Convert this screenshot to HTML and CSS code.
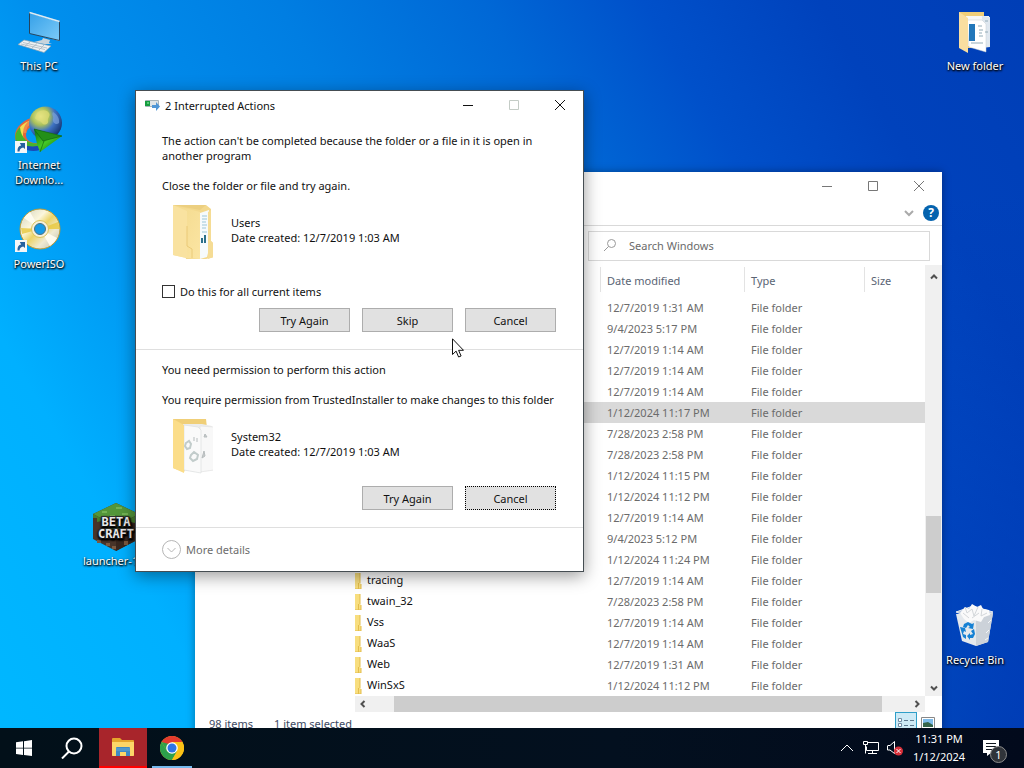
FILE: index.html
```html
<!DOCTYPE html>
<html lang="en">
<head>
  <meta charset="UTF-8">
  <meta name="viewport" content="width=device-width, initial-scale=1.0">
  <title>Desktop</title>
  <link rel="stylesheet" href="styles.css">
</head>
<body>

  <svg class="defs" aria-hidden="true">
    <defs>
      <linearGradient id="gold" x1="0" y1="0" x2="1" y2="1"><stop offset="0" stop-color="#f3d98c"/><stop offset="1" stop-color="#fbe5a3"/></linearGradient>
      <linearGradient id="screen" x1="0" y1="0" x2="1" y2="1"><stop offset="0" stop-color="#35a0e8"/><stop offset="1" stop-color="#7ccbf8"/></linearGradient>
      <radialGradient id="globe" cx="0.35" cy="0.3" r="0.75"><stop offset="0" stop-color="#f3f29a"/><stop offset="0.35" stop-color="#a9c05a"/><stop offset="0.6" stop-color="#3f74c4"/><stop offset="1" stop-color="#15326e"/></radialGradient>
      <linearGradient id="arrow" x1="0" y1="0" x2="1" y2="1"><stop offset="0" stop-color="#0a6b14"/><stop offset="0.5" stop-color="#45c926"/><stop offset="1" stop-color="#06580c"/></linearGradient>
      <linearGradient id="disc" x1="0" y1="0" x2="1" y2="1"><stop offset="0" stop-color="#d0d0be"/><stop offset="0.35" stop-color="#fbf6dc"/><stop offset="0.5" stop-color="#ecd468"/><stop offset="0.7" stop-color="#efead2"/><stop offset="1" stop-color="#bcbcae"/></linearGradient>
      <symbol id="shortcut" viewBox="0 0 12 12">
        <rect width="12" height="12" fill="#f4f6f8"/>
        <path d="M2.500 10.500C2.300 7 3.600 5 6.200 4.600L4.800 2H10v6L8.200 6.500C6 6.800 4.800 8 4.500 10.500z" fill="#26619f"/>
      </symbol>
      <symbol id="slice" viewBox="0 0 7 16">
        <path d="M0 0h5v10l1 1v5H0z" fill="#f8de7e"/>
        <path d="M5 0v10M3.500 10v6M6 11v5H0" fill="none" stroke="#e3bd4d"/>
      </symbol>
    </defs>
  </svg>

  <main class="desktop">
    <a class="shortcut pc" href="#">
      <svg viewBox="0 0 48 48">
        <path d="M14.500 4l30 9v20l-30-8z" fill="#d6e9f5"/>
        <path d="M14.500 4.500l30 9v19l-30-7z" fill="url(#screen)" stroke="#24445e"/>
        <path d="M14.500 4.500l30 9" stroke="#d9edf9" stroke-width="1.500"/>
        <path d="M28 30l7 2-1 3 3 1-8 0-10-2 8-2z" fill="#c8d4dc"/>
        <path d="M9 32l27 6-7 6.500L3 36.500z" fill="#eef2f4" stroke="#8fa3b1" stroke-width="0.700"/>
        <path d="M8 34.500l24 5.500M6 36l24 5.500M15 34l-5 4M22 35.500l-5 4.500M29 37l-5 5" stroke="#a9b6c0" stroke-width="0.800"/>
      </svg>
      <span>This PC</span>
    </a>
    <a class="shortcut idm" href="#">
      <svg viewBox="0 0 48 48">
        <path d="M20 10C9 12 0 20 0 29s7 13 19 13l6-6c-8 1-14-2-14-8 0-5 4-9 10-10z" fill="#e3653c"/>
        <path d="M14 14C6 17 1 24 1 30s7 12 19 12l4-5c-9 1-16-3-16-9s4-10 8-11z" fill="#f3dc50"/>
        <path d="M5 20c-5 5-6 11-3 16 3 6 13 8 21 6l3-6C15 38 6 33 5 20z" fill="#46b52c"/>
        <path d="M1 33c3 9 14 13 24 10l2-5C17 41 6 39 1 33z" fill="#1a49b5"/>
        <path d="M18 14c-6 2-9 7-8 12" fill="none" stroke="#f08a4a" stroke-width="3"/>
        <circle cx="30.500" cy="16" r="16.500" fill="url(#globe)"/>
        <path d="M22 6c5-4 10-3 12 0s-2 5-1 8-4 5-6 2-6-3-7-5z" fill="#e0dd76" opacity="0.700"/>
        <path d="M38 5c4 2 7 7 6 11-3 3-7-1-6-4s-2-4 0-7z" fill="#7ba1dc" opacity="0.700"/>
        <path d="M19 22l28 7-22 16-3-8z" fill="url(#arrow)"/>
        <path d="M19 22l9 12 19-5zM29 34l-4 11" fill="#238f18" stroke="#0b5c10" stroke-width="0.600"/>
      </svg>
      <svg class="badge"><use href="#shortcut"/></svg>
      <span>Internet<br>Downlo...</span>
    </a>
    <a class="shortcut iso" href="#">
      <svg viewBox="0 0 48 48">
        <circle cx="25" cy="23" r="20" fill="url(#disc)" stroke="#b89a35"/>
        <path d="M25 23L9 12a20 20 0 0 1 6-6zM25 23l17 9a20 20 0 0 1-7 8z" fill="#fffdf2" opacity="0.900"/>
        <path d="M25 23L7 28l-1-6zM25 23l18-7 2 7z" fill="#e8c83b" opacity="0.800"/>
        <circle cx="25" cy="23" r="8.500" fill="#f5f0dc" stroke="#dcc35a"/>
        <circle cx="25" cy="23" r="5.500" fill="#159be6" stroke="#4d7181"/>
      </svg>
      <svg class="badge"><use href="#shortcut"/></svg>
      <span>PowerISO</span>
    </a>
    <a class="shortcut launcher" href="#">
      <svg viewBox="0 0 48 48">
        <path d="M25 0l23 11v25L25 48 2 36V11z" fill="#483429"/>
        <path d="M25 24l23-13v25L25 48z" fill="#38271f"/>
        <path d="M25 0l23 11-23 12L2 11z" fill="#53963a"/>
        <path d="M2 11l23 12 23-12v5l-4 1v3l-5-1v4l-5 0v3l-9 1-8-2v-3l-6 1v-5l-5 1v-4l-4 0z" fill="#467d2e"/>
        <path d="M11 8h5v2h-5zM25 4h6v2h-6zM31 10h6v2h-6zM19 12h5v2h-5z" fill="#72b354"/>
        <path d="M6 37h4v3H6zM15 40h4v3h-4zM21 43h4v3h-4zM33 38h4v4h-4z" fill="#7b5940"/>
        <g class="cube-text"><text x="25" y="23">BETA</text><text x="25" y="35">CRAFT</text></g>
      </svg>
      <span>launcher-1...</span>
    </a>
    <a class="shortcut folder" href="#">
      <svg viewBox="0 0 48 48">
        <path d="M8 4h25v36H8z" fill="#f0ce78"/>
        <path d="M15 8h23l1 30H17z" fill="#f8f9f8"/>
        <path d="M31 8l8 1v30l-8 1z" fill="#dfe7ef"/>
        <path d="M16 12h15l4 4v28l-17-5z" fill="#fff" stroke="#c5ccd0" stroke-width="0.500"/>
        <path d="M18 16h6v17h-6z" fill="#2277ba"/>
        <path d="M27 18h4M28 22h4M28 25h3M28 28h4M20 35h12M34 13h3M34 24h3" stroke="#92abb7"/>
        <path d="M8 4l9 6v35L8 40z" fill="#f9dea0"/>
      </svg>
      <span>New folder</span>
    </a>
    <a class="shortcut bin" href="#">
      <svg viewBox="0 0 48 48">
        <path d="M5 12l37-1-5 29-12 4-14-5z" fill="#e5e9ed"/>
        <path d="M25 16l17-5-5 29-12 4z" fill="#ccd2d9"/>
        <path d="M5 10l17-6 20 6-16 8z" fill="#b8c7dc" stroke="#e4eaf1"/>
        <path d="M9 11l5-6 4 2 3-5 5 3 4-2 2 4 6 1 1 5-6 2-3 5-7-2-5 3-5-4z" fill="#fafafa"/>
        <path d="M14 5l2 6 5-4 2 7 4-9M31 7l-1 7 6-3M12 11l6 5M21 16l7-5" fill="none" stroke="#d3d7da"/>
        <path d="M40 18l-3 3M38 28l-3 3M37 36l-3 2" fill="none" stroke="#f4f6f8"/>
        <path d="M13 22l4-2 4 2 2-1-1 6-5-1 2-1-2-2-2 3-3-1zM9 25l5 1 1 4-2-1-1 3 3 1v4l-3-2zM23 27l1 5-2 4-3 0 0 2-3-4 3-3v2l3-1-2-3z" fill="#1681d4"/>
      </svg>
      <span>Recycle Bin</span>
    </a>
  </main>

  <section class="window explorer">
    <header class="titlebar">
      <button class="win-btn" aria-label="Minimize"><svg viewBox="0 0 10 10"><path d="M0 5.500h10"/></svg></button>
      <button class="win-btn" aria-label="Maximize"><svg viewBox="0 0 10 10"><path d="M0.500 0.500h9v9h-9z"/></svg></button>
      <button class="win-btn" aria-label="Close"><svg viewBox="0 0 10 10"><path d="M0 0l10 10M10 0L0 10"/></svg></button>
    </header>
    <div class="ribbon">
      <button class="expand" aria-label="Expand ribbon"><svg viewBox="0 0 10 10"><path d="M1 3l4 4 4-4"/></svg></button>
      <button class="help" aria-label="Help">?</button>
    </div>
    <div class="location">
      <div class="address"></div>
      <label class="search">
        <svg viewBox="0 0 14 14"><circle cx="8.500" cy="5.500" r="4"/><path d="M5.500 8.500L1 13"/></svg>
        <input type="text" placeholder="Search Windows" aria-label="Search Windows">
      </label>
    </div>
    <div class="panes">
      <nav class="tree"></nav>
      <div class="listing">
        <table>
          <thead>
            <tr><th class="name"></th><th class="date">Date modified</th><th class="type">Type</th><th>Size</th></tr>
          </thead>
          <tbody>
            <tr><td></td><td>12/7/2019 1:31 AM</td><td>File folder</td><td></td></tr>
            <tr><td></td><td>9/4/2023 5:17 PM</td><td>File folder</td><td></td></tr>
            <tr><td></td><td>12/7/2019 1:14 AM</td><td>File folder</td><td></td></tr>
            <tr><td></td><td>12/7/2019 1:14 AM</td><td>File folder</td><td></td></tr>
            <tr><td></td><td>12/7/2019 1:14 AM</td><td>File folder</td><td></td></tr>
            <tr class="selected"><td></td><td>1/12/2024 11:17 PM</td><td>File folder</td><td></td></tr>
            <tr><td></td><td>7/28/2023 2:58 PM</td><td>File folder</td><td></td></tr>
            <tr><td></td><td>7/28/2023 2:58 PM</td><td>File folder</td><td></td></tr>
            <tr><td></td><td>1/12/2024 11:15 PM</td><td>File folder</td><td></td></tr>
            <tr><td></td><td>1/12/2024 11:12 PM</td><td>File folder</td><td></td></tr>
            <tr><td></td><td>12/7/2019 1:14 AM</td><td>File folder</td><td></td></tr>
            <tr><td></td><td>9/4/2023 5:12 PM</td><td>File folder</td><td></td></tr>
            <tr><td></td><td>1/12/2024 11:24 PM</td><td>File folder</td><td></td></tr>
            <tr><td><svg><use href="#slice"/></svg>tracing</td><td>12/7/2019 1:14 AM</td><td>File folder</td><td></td></tr>
            <tr><td><svg><use href="#slice"/></svg>twain_32</td><td>7/28/2023 2:58 PM</td><td>File folder</td><td></td></tr>
            <tr><td><svg><use href="#slice"/></svg>Vss</td><td>12/7/2019 1:14 AM</td><td>File folder</td><td></td></tr>
            <tr><td><svg><use href="#slice"/></svg>WaaS</td><td>12/7/2019 1:14 AM</td><td>File folder</td><td></td></tr>
            <tr><td><svg><use href="#slice"/></svg>Web</td><td>12/7/2019 1:31 AM</td><td>File folder</td><td></td></tr>
            <tr><td><svg><use href="#slice"/></svg>WinSxS</td><td>1/12/2024 11:12 PM</td><td>File folder</td><td></td></tr>
          </tbody>
        </table>
        <div class="hscroll">
          <svg viewBox="0 0 8 8"><path d="M5.500 1l-3 3 3 3"/></svg>
          <div class="thumb"></div>
          <svg viewBox="0 0 8 8"><path d="M2.500 1l3 3-3 3"/></svg>
        </div>
      </div>
      <div class="vscroll">
        <svg viewBox="0 0 8 8"><path d="M1 5.500l3-3 3 3"/></svg>
        <div class="thumb"></div>
        <svg viewBox="0 0 8 8"><path d="M1 2.500l3 3 3-3"/></svg>
      </div>
    </div>
    <footer class="status">
      <span>98 items</span>
      <span>1 item selected</span>
      <div class="views">
        <button class="view on" aria-label="Details"><svg viewBox="0 0 16 16"><path d="M0.500 1.500h3v3h-3zM0.500 6.500h3v3h-3zM0.500 11.500h3v3h-3z" fill="#fff" stroke="#6f8ba3"/><path d="M6 3.500h4M12 3.500h4M6 8.500h4M12 8.500h4M6 13.500h4M12 13.500h4" stroke="#5c788e"/></svg></button>
        <button class="view" aria-label="Thumbnails"><svg viewBox="0 0 14 12"><path d="M0.500 0.500h13v11H0.500z" fill="#fff" stroke="#888"/><path d="M2 2h10v8H2z" fill="#7dbbe9"/><path d="M2 6l5-1 5 3v2H2z" fill="#356449"/></svg></button>
      </div>
    </footer>
  </section>

  <section class="window dialog" role="dialog" aria-labelledby="dialog-title">
    <header class="titlebar">
      <svg class="app-icon" viewBox="0 0 16 12">
        <path d="M0.500 1.500h13v6h-13z" fill="#dfe5e8" stroke="#a7b4ba"/>
        <path d="M0 2h5v5H0z" fill="#169c40"/><path d="M2 3h2v2H2z" fill="#55c976"/>
        <path d="M7 6h4V3l4 4.500-4 4.500V9H7z" fill="#4f96d6"/>
      </svg>
      <h1 id="dialog-title">2 Interrupted Actions</h1>
      <button class="win-btn" aria-label="Minimize"><svg viewBox="0 0 10 10"><path d="M0 5.500h10"/></svg></button>
      <button class="win-btn" aria-label="Maximize" disabled><svg viewBox="0 0 10 10"><path d="M0.500 0.500h9v9h-9z"/></svg></button>
      <button class="win-btn" aria-label="Close"><svg viewBox="0 0 10 10"><path d="M0 0l10 10M10 0L0 10"/></svg></button>
    </header>

    <div class="action">
      <p>The action can't be completed because the folder or a file in it is open in<br>another program</p>
      <p>Close the folder or file and try again.</p>
      <div class="item">
        <svg viewBox="0 0 48 56">
          <path d="M8 1h33l5 4v32l3 3v13l-8 2H21z" fill="#f3d88c"/>
          <path d="M35 9l9-3v39l-2 8-7 2z" fill="#f6fafc"/>
          <path d="M37 12h5M37 15h5M37 18h4M37 21h5M37 24h4M37 28h5" stroke="#9cc6d8"/>
          <path d="M37 34v5M40 31v8" stroke="#2b6f8a" stroke-width="2"/>
          <path d="M43 8l3-2v31l3 3v13l-6 2z" fill="#f5dc95"/>
          <path d="M8 1l27 7v47l-14-1L8 51z" fill="url(#gold)"/>
          <path d="M8 1l14 6v47L8 51z" fill="#f9e2a0"/>
          <path d="M22 22v20l5 3v9" fill="none" stroke="#eaca78"/>
          <path d="M8 1h33l-6 5z" fill="#eccf80"/>
        </svg>
        <p>Users<br>Date created: 12/7/2019 1:03 AM</p>
      </div>
      <label class="all"><input type="checkbox"> Do this for all current items</label>
      <div class="buttons">
        <button>Try Again</button>
        <button>Skip</button>
        <button>Cancel</button>
      </div>
    </div>

    <div class="action">
      <p>You need permission to perform this action</p>
      <p>You require permission from TrustedInstaller to make changes to this folder</p>
      <div class="item">
        <svg viewBox="0 0 48 56">
          <path d="M8 1h33l1 9-23 44-11-4z" fill="#f0cf78"/>
          <path d="M18 6h19l10 2v44l-16 2-13-2z" fill="#ececec"/>
          <path d="M35 8l14 1v43l-14 2z" fill="#f8f8f8" stroke="#e2e2e2" stroke-width="0.700"/>
          <path d="M19 7l14 2 3 3v43l-17-3z" fill="#fafafa" stroke="#dde0e0" stroke-width="0.700"/>
          <path d="M21 25l3-2 2 3-1 4-3 1-2-3zM26 37l3-3 4 3-1 4-4 2-3-3z" fill="none" stroke="#c2cccb" stroke-width="2"/>
          <path d="M29 19v4M32 20v4M40 16l-1 3h3zM39 33l-2 7 3-2z" stroke="#b6bcbd" fill="#c8cbcc"/>
          <path d="M8 1l11 6v48L8 50z" fill="#fbdd89"/>
        </svg>
        <p>System32<br>Date created: 12/7/2019 1:03 AM</p>
      </div>
      <div class="buttons">
        <button>Try Again</button>
        <button class="focused">Cancel</button>
      </div>
    </div>

    <footer>
      <button class="more"><svg viewBox="0 0 19 19"><circle cx="9.500" cy="9.500" r="9"/><path d="M5.500 8l4 4 4-4"/></svg>More details</button>
    </footer>
  </section>

  <nav class="taskbar">
    <button class="task" aria-label="Start"><svg viewBox="0 0 16 16"><path d="M0 2.300l7-1v6.400H0zM8 1.200L16 0v7.700H8zM0 8.500h7v6.400l-7-1zM8 8.500h8V16l-8-1z" fill="#fff"/></svg></button>
    <button class="task find" aria-label="Search"><svg viewBox="0 0 22 22"><circle cx="13" cy="9" r="7.500"/><path d="M8 14.500L1 21.500"/></svg></button>
    <button class="task files" aria-label="File Explorer"><svg viewBox="0 0 22 18">
      <path d="M0 1q0-1 1-1h7l2 2h11q1 0 1 1v14q0 1-1 1H1q-1 0-1-1z" fill="#e5a52c"/>
      <path d="M0 4h22v13q0 1-1 1H1q-1 0-1-1z" fill="#fcd668"/>
      <path d="M4 10q0-1 1-1h12q1 0 1 1v8h-4v-4H8v4H4z" fill="#3f8ac4"/><path d="M4 10h14v3H4z" fill="#5099cd"/>
    </svg></button>
    <button class="task chrome" aria-label="Chrome"><svg viewBox="0 0 24 24">
      <circle cx="12" cy="12" r="12" fill="#fbc116"/>
      <path d="M12 12L1.600 6A12 12 0 0 1 22.400 6H12z" fill="#e33b2e"/>
      <path d="M1.600 6A12 12 0 0 0 12 24l5.200-9-5.200 2-5-2z" fill="#2da14b"/>
      <path d="M1.600 6l5.200 9 2-7z" fill="#2da14b"/>
      <path d="M22.400 6H12l5.200 9L12 24A12 12 0 0 0 22.400 6z" fill="#fbc116"/>
      <circle cx="12" cy="12" r="5.800" fill="#fff"/><circle cx="12" cy="12" r="4.500" fill="#2e75e6"/>
    </svg></button>
    <div class="tray">
      <button aria-label="Show hidden icons"><svg viewBox="0 0 16 16"><path d="M2 11l6-6 6 6"/></svg></button>
      <button aria-label="Network"><svg viewBox="0 0 16 16"><path d="M4.500 2.500h11v8H3.500v-4M9.500 10.500v3M5 13.500h9M0.500 1.500h4v3h-4zM2.500 4.500v9"/></svg></button>
      <button aria-label="Volume muted"><svg viewBox="0 0 16 16"><path d="M1 5.500h2L7.500 1.500v12L3 10H0.500V5.500"/><circle cx="11.500" cy="11" r="4.500" fill="#d8303a" stroke="none"/><path d="M9.500 9l4 4M13.500 9l-4 4"/></svg></button>
    </div>
    <button class="clock">11:31 PM<br>1/12/2024</button>
    <button class="notify" aria-label="Notifications"><svg viewBox="0 0 16 16"><path d="M0 0h16v13H8l-4 3v-3H0z" fill="#fff"/><path d="M3 3.500h10M3 6.500h10M3 9.500h6" stroke="#111820"/></svg><span>1</span></button>
  </nav>

  <svg class="cursor" viewBox="0 0 12 20"><path d="M0.500 0.800v15.700l3.600-3.400 2.500 5.900 2.500-1-2.500-5.700h4.900z" fill="#fff" stroke="#111"/></svg>

</body>
</html>
```
FILE: styles.css
```css
* {
  box-sizing: border-box;
}

body {
  margin: 0;
  height: 100vh;
  overflow: hidden;
  font-family: "Noto Sans", "Open Sans", sans-serif;
  font-size: 11px;
  line-height: 15px;
  color: #111;
  background:
    radial-gradient(circle at 100% 100%, rgba(0, 48, 170, 0.7), rgba(0, 48, 170, 0) 45%),
    linear-gradient(60deg, #00b8ff 0%, #00b0ff 17%, #0090ee 32%, #007ee2 49%, #0068d6 63%, #0050ca 74%, #0042bc 86%, #003eb6 100%);
}

button, input {
  font: inherit;
  color: inherit;
}

button {
  padding: 0;
  border: none;
  background: none;
}

p, h1 {
  margin: 0;
  font-size: inherit;
  font-weight: normal;
}

svg {
  display: block;
  flex: none;
}

.defs {
  position: absolute;
  width: 0;
  height: 0;
}

/* desktop icons */

.desktop {
  display: grid;
  grid-template-columns: 76px 76px 1fr 76px;
  grid-template-rows: repeat(7, 99px);
  padding: 0 11px 0 1px;
}

.shortcut {
  position: relative;
  display: flex;
  flex-direction: column;
  align-items: center;
  gap: 2px;
  padding-top: 8px;
  color: #fff;
  text-align: center;
  text-decoration: none;
  white-space: nowrap;
  text-shadow: 0 1px 2px #000, 1px 1px 2px #000;
}

.shortcut svg {
  width: 48px;
  height: 48px;
  overflow: visible;
}

.shortcut .badge {
  position: absolute;
  left: 14px;
  top: 42px;
  width: 12px;
  height: 12px;
}

.pc { grid-area: 1 / 1; }
.idm { grid-area: 2 / 1; }
.iso { grid-area: 3 / 1; }
.launcher { grid-area: 6 / 2; }
.folder { grid-area: 1 / 4; }
.bin { grid-area: 7 / 4; }

.cube-text {
  font: bold 12px/12px "DejaVu Sans Mono", monospace;
  text-anchor: middle;
  fill: #e8e8e8;
  stroke: #333;
  stroke-width: 2px;
  paint-order: stroke;
}

/* windows */

.window {
  position: absolute;
  background: #fff;
}

.titlebar {
  display: flex;
  justify-content: flex-end;
  align-items: center;
}

.win-btn {
  display: flex;
  justify-content: center;
  align-items: center;
  width: 46px;
  height: 28px;
}

.win-btn svg {
  width: 10px;
  height: 10px;
  overflow: visible;
  fill: none;
  stroke: currentColor;
}

.win-btn:disabled {
  color: #c4ccc6;
}

/* explorer */

.explorer {
  left: 195px;
  right: 82px;
  top: 172px;
  color: #6b6b6b;
  box-shadow: 0 0 8px rgba(0, 0, 0, 0.35);
}

.explorer .win-btn {
  color: #777;
}

.ribbon {
  display: flex;
  justify-content: flex-end;
  align-items: center;
  gap: 9px;
  height: 26px;
  padding-right: 3px;
  border-bottom: 1px solid #d9d9d9;
}

.expand svg {
  width: 10px;
  height: 10px;
  fill: none;
  stroke: #aaa;
  stroke-width: 2;
}

.help {
  width: 16px;
  height: 16px;
  border-radius: 50%;
  background: #0563ae;
  color: #fff;
  font-weight: bold;
  font-size: 12px;
}

.location {
  display: flex;
  gap: 4px;
  padding: 5px 12px 4px;
}

.address {
  flex: 1;
  border: 1px solid #d9d9d9;
}

.search {
  display: flex;
  align-items: center;
  gap: 12px;
  width: 342px;
  height: 30px;
  padding: 0 14px 2px;
  border: 1px solid #d9d9d9;
}

.search svg {
  width: 14px;
  height: 14px;
  fill: none;
  stroke: #999;
}

.search input {
  flex: 1;
  min-width: 0;
  padding: 0;
  border: none;
  outline: none;
}

.search input::placeholder {
  color: #6b6b6b;
}

.panes {
  display: flex;
}

.tree {
  width: 160px;
}

.listing {
  flex: 1;
}

table {
  width: 100%;
  table-layout: fixed;
  border-collapse: collapse;
}

th, td {
  height: 21px;
  padding: 0 0 0 7px;
  text-align: left;
  font-weight: normal;
  white-space: nowrap;
}

th {
  height: 32px;
  padding-bottom: 2px;
  color: #5a6474;
  background: linear-gradient(#e3e3e3, #e3e3e3) 0 2px / 1px 25px no-repeat;
}

th.name {
  width: 245px;
  background: none;
}

th.date {
  width: 144px;
}

th.type {
  width: 120px;
}

td:first-child {
  padding-left: 0;
  color: #111;
}

td svg {
  display: inline-block;
  width: 7px;
  height: 16px;
  margin-right: 5px;
  vertical-align: middle;
}

.selected {
  background: #d9d9d9;
}

.hscroll, .vscroll {
  display: flex;
  align-items: center;
  background: #f0f0f0;
}

.hscroll {
  height: 16px;
  padding: 0 4px;
}

.hscroll svg, .vscroll svg {
  width: 8px;
  height: 8px;
  fill: none;
  stroke: #505050;
  stroke-width: 2;
}

.hscroll .thumb {
  flex: 1;
  height: 16px;
  margin: 0 31px 0 27px;
  background: #cdcdcd;
}

.vscroll {
  flex-direction: column;
  width: 17px;
  margin-bottom: 16px;
  padding: 8px 0 4px;
}

.vscroll .thumb {
  width: 15px;
  height: 77px;
  margin: auto 0 91px;
  background: #cdcdcd;
}

.status {
  display: flex;
  gap: 21px;
  height: 30px;
  padding: 4px 3px 0 14px;
  color: #3d4a63;
}

.views {
  display: flex;
  margin: -4px 0 0 auto;
}

.view {
  display: flex;
  justify-content: center;
  width: 22px;
  height: 20px;
  padding-top: 4px;
}

.view svg {
  width: 16px;
  height: 16px;
}

.view:last-child svg {
  width: 14px;
  height: 12px;
  margin-top: 1px;
}

.on {
  border: 1px solid #2f9fc9;
  background: #cdeaf6;
}

/* dialog */

.dialog {
  left: 135px;
  top: 90px;
  width: 449px;
  border: 1px solid #454d52;
  box-shadow: 0 4px 16px rgba(0, 0, 0, 0.4);
}

.dialog h1 {
  flex: 1;
}

.dialog .app-icon {
  width: 16px;
  height: 12px;
  margin: 0 4px 0 9px;
}

.action {
  display: flex;
  flex-direction: column;
  gap: 15px;
  padding: 14px 27px 17px 26px;
  border-bottom: 1px solid #dfdfdf;
}

.action + .action {
  padding-top: 12px;
}

.action p {
  white-space: nowrap;
}

.item {
  display: flex;
  gap: 18px;
  margin: -4px 0 -3px 3px;
}

.item svg {
  width: 48px;
  height: 56px;
}

.item p {
  padding-top: 11px;
}

.all {
  display: flex;
  align-items: center;
  gap: 5px;
  height: 13px;
  margin: 13px 0 -5px;
}

.all input {
  appearance: none;
  width: 13px;
  height: 13px;
  margin: 0;
  border: 1px solid #333;
  background: #fff;
}

.buttons {
  display: flex;
  justify-content: flex-end;
  gap: 12px;
}

.buttons button {
  width: 91px;
  height: 24px;
  border: 1px solid #adadad;
  background: #e1e1e1;
}

.buttons .focused {
  border: 1px dotted #000;
}

.more {
  display: flex;
  align-items: center;
  gap: 5px;
  padding: 12px 26px;
  color: #6d6d6d;
}

.more svg {
  width: 19px;
  height: 19px;
  fill: none;
  stroke: #b5b5b5;
}

/* taskbar */

.taskbar {
  position: absolute;
  left: 0;
  right: 0;
  bottom: 0;
  display: flex;
  align-items: center;
  height: 40px;
  color: #fff;
  background: linear-gradient(90deg, #021019, #03101f 60%, #020a1c);
}

.task {
  display: flex;
  justify-content: center;
  align-items: center;
  width: 48px;
  height: 40px;
}

.task svg {
  width: 16px;
  height: 16px;
}

.find svg {
  width: 22px;
  height: 22px;
  fill: none;
  stroke: #fff;
  stroke-width: 2;
}

.files {
  margin-left: 3px;
  background: #a8252b;
  border-bottom: 2px solid #f00;
}

.files svg {
  width: 22px;
  height: 18px;
}

.chrome {
  margin-left: 1px;
  background: linear-gradient(#76b9ed, #76b9ed) center bottom / 40px 2px no-repeat;
}

.chrome svg {
  width: 24px;
  height: 24px;
}

.tray {
  display: flex;
  gap: 8px;
  margin-left: auto;
}

.tray svg {
  width: 16px;
  height: 16px;
  fill: none;
  stroke: #fff;
}

.clock {
  width: 72px;
  line-height: 18px;
  text-align: center;
}

.notify {
  position: relative;
  width: 32px;
  height: 40px;
  margin-right: 17px;
}

.notify svg {
  width: 16px;
  height: 16px;
  margin-left: 8px;
}

.notify span {
  position: absolute;
  left: 15px;
  top: 18px;
  width: 17px;
  height: 17px;
  border: 1px solid #8c8c8c;
  border-radius: 50%;
  background: #30343a;
}

.cursor {
  position: absolute;
  left: 452px;
  top: 338px;
  width: 12px;
  height: 20px;
}
```
